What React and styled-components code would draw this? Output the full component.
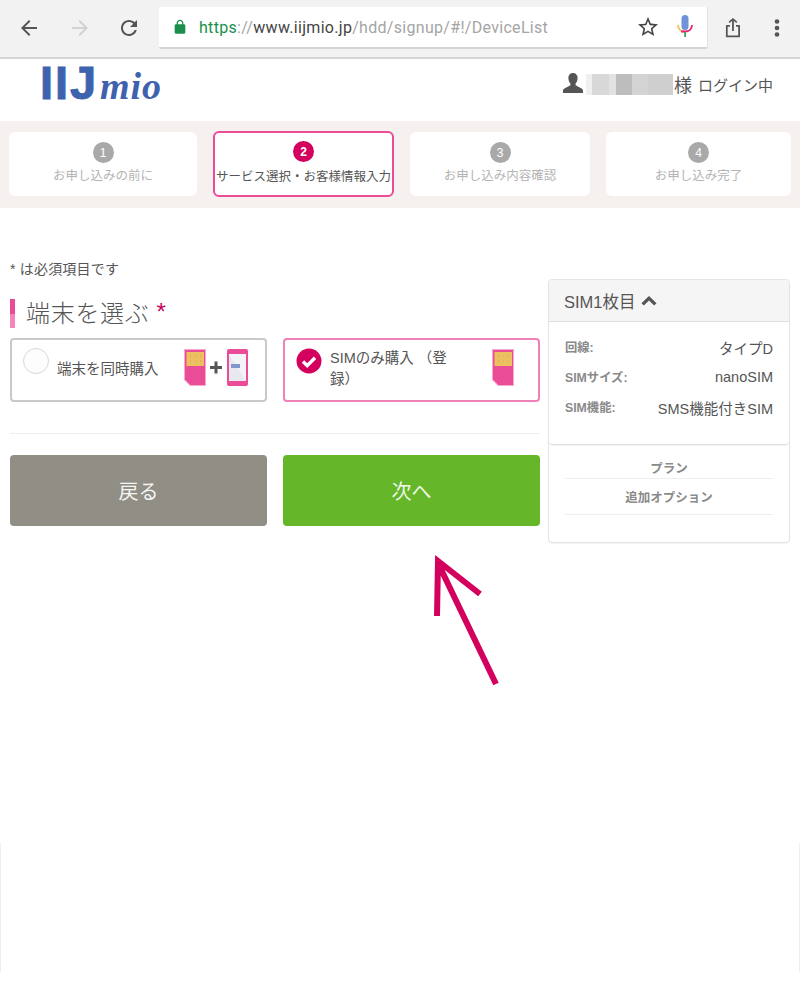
import React from "react";
import styled, { createGlobalStyle } from "styled-components";

const GlobalStyle = createGlobalStyle`
  * { box-sizing: border-box; }
  html, body { margin: 0; padding: 0; background: #fff; }
  body { font-family: "Liberation Sans", "Noto Sans CJK JP", sans-serif; color: #555; }
`;

const Page = styled.div`
  position: relative;
  width: 800px;
  height: 1005px;
  overflow: hidden;
  background: #fff;
`;

/* browser chrome */
const Chrome = styled.div`
  display: flex;
  align-items: center;
  height: 59px;
  padding: 0 0 1px 17px;
  background: #f2f2f2;
  border-bottom: 2px solid #d6d6d6;
`;
const NavIcon = styled.svg`
  width: 24px;
  height: 24px;
  margin-right: ${(p) => p.$gap}px;
  fill: ${(p) => p.$color || "#555"};
  flex: none;
`;
const UrlBox = styled.div`
  display: flex;
  align-items: center;
  width: 549px;
  height: 42px;
  margin-right: 13px;
  padding-left: 13px;
  background: #fff;
  border-radius: 2px;
  border-bottom: 2px solid #d4d4d4;
  border-right: 1px solid #e2e2e2;
  font-family: Roboto, sans-serif;
  font-size: 16px;
`;
const LockIcon = styled.svg`
  width: 16px;
  height: 16px;
  fill: #1a8f4c;
  margin-right: 11px;
  flex: none;
`;
const UrlText = styled.span`
  flex: 1;
  white-space: nowrap;
  color: #a5a5a5;
  letter-spacing: 0.3px;
`;
const Scheme = styled.span`
  color: #1a8f4c;
`;
const Host = styled.span`
  color: #444;
`;

/* site header */
const SiteHeader = styled.header`
  display: flex;
  align-items: center;
  justify-content: space-between;
  height: 62px;
  padding: 0 27px 12px 40px;
`;
const Logo = styled.div`
  display: flex;
  align-items: baseline;
  margin-top: -3px;
  color: #3e62ae;
  line-height: 1;
`;
const LogoBlock = styled.span`
  font-family: "Liberation Sans", sans-serif;
  font-weight: 700;
  font-size: 47px;
  letter-spacing: 2px;
  width: 60px;
  -webkit-text-stroke: 1px #3e62ae;
`;
const LogoScript = styled.span`
  font-family: "Liberation Serif", serif;
  font-style: italic;
  font-weight: 700;
  font-size: 38px;
  letter-spacing: 1px;
`;
const LoginInfo = styled.div`
  display: flex;
  align-items: center;
  font-size: 15px;
  color: #555;
  white-space: nowrap;
`;
const PersonIcon = styled.svg`
  width: 20px;
  height: 20px;
  fill: #555;
  margin-right: 3px;
  margin-top: -3px;
`;
const Mosaic = styled.div`
  display: flex;
  width: 87px;
  height: 21px;
`;
const MosaicCell = styled.div`
  width: ${(p) => p.$w}px;
  background: ${(p) => p.$c};
`;
const Sama = styled.span`
  font-size: 18px;
  margin: 0 6px 0 1px;
`;

/* step bar */
const StepBar = styled.nav`
  display: flex;
  align-items: flex-start;
  gap: 16px;
  height: 87px;
  padding: 11px 9px 0;
  background: #f6f1ee;
`;
const StepCard = styled.div`
  display: flex;
  flex-direction: column;
  align-items: center;
  width: ${(p) => p.$w}px;
  height: ${(p) => (p.$active ? 66 : 64)}px;
  margin-top: ${(p) => (p.$active ? -1 : 0)}px;
  padding-top: ${(p) => (p.$active ? 8 : 10)}px;
  background: #fff;
  border-radius: 6px;
  border: ${(p) => (p.$active ? "2px solid #ea4c98" : "none")};
  color: ${(p) => (p.$active ? "#555" : "#b4b4b4")};
  font-size: 12.5px;
  white-space: nowrap;
`;
const StepNum = styled.div`
  display: flex;
  align-items: center;
  justify-content: center;
  width: 21px;
  height: 21px;
  margin-bottom: ${(p) => (p.$active ? 4 : 2)}px;
  border-radius: 50%;
  background: ${(p) => (p.$active ? "#d4005d" : "#a9a9a9")};
  color: #fff;
  font-size: 12px;
  font-weight: ${(p) => (p.$active ? 700 : 400)};
`;

/* main content */
const Main = styled.main`
  display: flex;
  align-items: flex-start;
  gap: 8px;
  padding: 68px 10px 0 10px;
`;
const FormColumn = styled.div`
  width: 530px;
  flex: none;
`;
const Required = styled.p`
  margin: -16px 0 20px;
  font-size: 14px;
  letter-spacing: 0.2px;
  line-height: 19px;
  color: #555;
`;
const Heading = styled.h2`
  display: flex;
  align-items: center;
  height: 29px;
  margin: 0 0 10px;
  padding: 0 0 4px 11px;
  font-size: 24px;
  font-weight: 300;
  color: #555;
  letter-spacing: 0.7px;
  border-left: 5px solid #f07ab5;
  border-image: linear-gradient(#e94b97 50%, #f586bd 50%) 1;
`;
const Star = styled.span`
  margin-left: 7px;
  color: #c9045c;
`;
const Options = styled.div`
  display: grid;
  grid-template-columns: 257px 257px;
  gap: 16px;
`;
const Option = styled.div`
  display: flex;
  height: 64px;
  padding: 8px 0 0 11px;
  border: 2px solid ${(p) => (p.$checked ? "#f280b8" : "#c9c9c9")};
  border-radius: 4px;
  position: relative;
`;
const Radio = styled.div`
  width: 26px;
  height: 26px;
  flex: none;
  border-radius: 50%;
  border: 1px solid #d8d8d8;
  background: #fdfdfd;
`;
const CheckIcon = styled.svg`
  width: 26px;
  height: 26px;
  flex: none;
`;
const OptionLabel = styled.div`
  width: ${(p) => p.$w}px;
  margin-left: ${(p) => p.$ml}px;
  padding-top: ${(p) => p.$pt}px;
  font-size: 14.5px;
  line-height: 21px;
  color: #555;
`;
const OptionArt = styled.svg`
  margin-left: ${(p) => p.$ml}px;
  margin-top: 1px;
  flex: none;
`;
const Divider = styled.hr`
  margin: 31px 0 21px;
  border: 0;
  border-top: 1px solid #eee;
`;
const Buttons = styled.div`
  display: grid;
  grid-template-columns: 257px 257px;
  gap: 16px;
`;
const Button = styled.button`
  height: 71px;
  border: 0;
  border-radius: 4px;
  background: ${(p) => p.$bg};
  color: rgba(255, 255, 255, 0.92);
  font-family: inherit;
  font-size: 20px;
`;

/* side panel */
const Side = styled.aside`
  width: 242px;
  height: 264px;
  margin-top: 3px;
  border: 1px solid #e4e4e4;
  border-radius: 4px;
  box-shadow: 0 1px 1px rgba(0, 0, 0, 0.05);
`;
const SideHead = styled.div`
  display: flex;
  align-items: center;
  gap: 5px;
  height: 42px;
  padding-left: 15px;
  background: #f5f5f5;
  border-bottom: 1px solid #ddd;
  border-radius: 4px 4px 0 0;
  font-size: 16.5px;
  color: #555;
`;
const Chevron = styled.svg`
  width: 16px;
  height: 12px;
  fill: #555;
`;
const SideBody = styled.dl`
  height: 123px;
  margin: 0;
  padding: 10px 16px 0;
  border-bottom: 1px solid #e2e2e2;
  border-radius: 0 0 4px 4px;
  box-shadow: 0 1px 1px rgba(0, 0, 0, 0.06);
`;
const SideRow = styled.div`
  display: flex;
  align-items: center;
  justify-content: space-between;
  height: 30px;
`;
const SideKey = styled.dt`
  font-size: 12.3px;
  font-weight: 700;
  color: #8a8a8a;
`;
const SideValue = styled.dd`
  margin: 0;
  font-size: 14.5px;
  color: #555;
`;
const SideLinks = styled.div`
  padding: 16px 16px 0;
`;
const SideLink = styled.div`
  height: ${(p) => p.$h}px;
  padding-top: ${(p) => p.$pt}px;
  border-bottom: 1px solid #eee;
  text-align: center;
  font-size: 12.5px;
  line-height: 17px;
  font-weight: 700;
  color: #8a8a8a;
`;

const FooterStrip = styled.div`
  height: 129px;
  margin-top: 300px;
  border-left: 1px solid #eee;
  border-right: 1px solid #eee;
`;
const Arrow = styled.svg`
  position: absolute;
  left: 420px;
  top: 550px;
`;

const steps = [
  { n: 1, label: "お申し込みの前に", w: 188 },
  { n: 2, label: "サービス選択・お客様情報入力", w: 181, active: true },
  { n: 3, label: "お申し込み内容確認", w: 180 },
  { n: 4, label: "お申し込み完了", w: 185 },
];

const mosaic = [
  ["#f0f0f0", 6], ["#d8d8d8", 17], ["#e2e2e2", 7], ["#bdbdbd", 16],
  ["#d4d4d4", 16], ["#cfcfcf", 25],
];

const SimCard = () => (
  <g>
    <path d="M0 0H22V37H6L0 31Z" fill="#f6a9cf" />
    <path d="M1 1H21V36H6.5L1 30.5Z" fill="#ea4c98" />
    <rect x="2.5" y="3" width="17.5" height="14" fill="#ecc05f" />
    <path d="M6 7h1M11 7h1M16 7h1M6 12h1M11 12h1M16 12h1" stroke="#e58f7c" strokeWidth="1" />
  </g>
);

export default function App() {
  return (
    <Page>
      <GlobalStyle />
      <Chrome>
        <NavIcon viewBox="0 0 24 24" $gap={27}>
          <path d="M20 11H7.83l5.59-5.59L12 4l-8 8 8 8 1.41-1.41L7.83 13H20v-2z" />
        </NavIcon>
        <NavIcon viewBox="0 0 24 24" $gap={25} $color="#d2d2d2">
          <path d="M12 4l-1.41 1.41L16.17 11H4v2h12.17l-5.58 5.59L12 20l8-8z" />
        </NavIcon>
        <NavIcon viewBox="0 0 24 24" $gap={18}>
          <path d="M17.65 6.35C16.2 4.9 14.21 4 12 4c-4.42 0-7.99 3.58-7.99 8s3.57 8 7.99 8c3.73 0 6.84-2.55 7.73-6h-2.08c-.82 2.33-3.04 4-5.65 4-3.31 0-6-2.69-6-6s2.69-6 6-6c1.66 0 3.14.69 4.22 1.78L13 11h7V4l-2.35 2.35z" />
        </NavIcon>
        <UrlBox>
          <LockIcon viewBox="0 0 24 24">
            <path d="M18 8h-1V6c0-2.76-2.24-5-5-5S7 3.24 7 6v2H6c-1.1 0-2 .9-2 2v10c0 1.1.9 2 2 2h12c1.1 0 2-.9 2-2V10c0-1.1-.9-2-2-2zM9 6c0-1.66 1.34-3 3-3s3 1.34 3 3v2H9V6z" />
          </LockIcon>
          <UrlText>
            <Scheme>https</Scheme>://<Host>www.iijmio.jp</Host>/hdd/signup/#!/DeviceList
          </UrlText>
          <NavIcon viewBox="0 0 24 24" $gap={13} $color="#444">
            <path d="M22 9.24l-7.19-.62L12 2 9.19 8.63 2 9.24l5.46 4.73L5.82 21 12 17.27 18.18 21l-1.63-7.03L22 9.24zM12 15.4l-3.76 2.27 1-4.28-3.32-2.88 4.38-.38L12 6.1l1.71 4.04 4.38.38-3.32 2.88 1 4.28L12 15.4z" />
          </NavIcon>
          <svg width="24" height="24" viewBox="0 0 24 24" style={{ marginRight: 10 }}>
            <rect x="8.5" y="0" width="7" height="15" rx="3.5" fill="#6f93d6" />
            <path d="M5 10c0 4 3 6.5 7 6.5" fill="none" stroke="#f0c24b" strokeWidth="1.8" />
            <path d="M19 10c0 4-3 6.5-7 6.5H8" fill="none" stroke="#e5266e" strokeWidth="1.8" />
            <rect x="11.2" y="17" width="1.8" height="5" fill="#3fa45b" />
          </svg>
        </UrlBox>
        <NavIcon viewBox="0 0 24 24" $gap={20}>
          <g transform="translate(1.4 1.9) scale(.88)">
            <path d="M11 3.2V15h2V3.2l2.6 2.6L17 4.4 12 0 7 4.4l1.4 1.4zM5 8h3.5v2H6v10h12V10h-2.5V8H19c.6 0 1 .4 1 1v12c0 .6-.4 1-1 1H5c-.6 0-1-.4-1-1V9c0-.6.4-1 1-1z" />
          </g>
        </NavIcon>
        <NavIcon viewBox="0 0 24 24" $gap={0}>
          <circle cx="12" cy="5.5" r="2.3" />
          <circle cx="12" cy="12" r="2.3" />
          <circle cx="12" cy="18.5" r="2.3" />
        </NavIcon>
      </Chrome>

      <SiteHeader>
        <Logo>
          <LogoBlock>IIJ</LogoBlock>
          <LogoScript>mio</LogoScript>
        </Logo>
        <LoginInfo>
          <PersonIcon viewBox="0 0 20 20">
            <path d="M10 0c3 0 4.6 2.2 4.6 5.2 0 2.2-.8 4-2 5.2v1.8l6 3.2c.9.5 1.4 1.2 1.4 2.1V20H0v-2.5c0-.9.5-1.6 1.4-2.1l6-3.2v-1.8c-1.2-1.2-2-3-2-5.2C5.4 2.2 7 0 10 0z" />
          </PersonIcon>
          <Mosaic>
            {mosaic.map(([c, w], i) => (
              <MosaicCell key={i} $c={c} $w={w} />
            ))}
          </Mosaic>
          <Sama>様</Sama>
          ログイン中
        </LoginInfo>
      </SiteHeader>

      <StepBar>
        {steps.map((s) => (
          <StepCard key={s.n} $w={s.w} $active={s.active}>
            <StepNum $active={s.active}>{s.n}</StepNum>
            {s.label}
          </StepCard>
        ))}
      </StepBar>

      <Main>
        <FormColumn>
          <Required>* は必須項目です</Required>
          <Heading>
            端末を選ぶ<Star>*</Star>
          </Heading>
          <Options>
            <Option>
              <Radio />
              <OptionLabel $w={112} $ml={8} $pt={11}>端末を同時購入</OptionLabel>
              <OptionArt width="64" height="38" viewBox="0 0 64 38" $ml={15}>
                <SimCard />
                <path d="M26 18.5h12M32 12.5v12" stroke="#555" strokeWidth="3" />
                <rect x="43" y="0" width="21" height="37" rx="2" fill="#ea4c98" />
                <path d="M45 5H62V32H45Z" fill="#f4f4f8" />
                <path d="M45 5L62 32H45Z" fill="#e8e8ee" />
                <rect x="47" y="15" width="9" height="4" fill="#7f97cc" />
              </OptionArt>
            </Option>
            <Option $checked>
              <CheckIcon viewBox="0 0 26 26">
                <circle cx="13" cy="13" r="12.5" fill="#d4005d" />
                <path d="M7 13.5l4.2 4.2L19 9.8" fill="none" stroke="#fff" strokeWidth="3.4" />
              </CheckIcon>
              <OptionLabel $w={125} $ml={8} $pt={0}>SIMのみ購入 （登録）</OptionLabel>
              <OptionArt width="22" height="38" viewBox="0 0 22 38" $ml={37}>
                <SimCard />
              </OptionArt>
            </Option>
          </Options>
          <Divider />
          <Buttons>
            <Button $bg="#918e86">戻る</Button>
            <Button $bg="#66b62a">次へ</Button>
          </Buttons>
        </FormColumn>

        <Side>
          <SideHead>
            SIM1枚目
            <Chevron viewBox="0 0 16 12">
              <path d="M8 1l7.5 7.3-2.3 2.3L8 5.6l-5.2 5-2.3-2.3z" />
            </Chevron>
          </SideHead>
          <SideBody>
            <SideRow>
              <SideKey>回線:</SideKey>
              <SideValue>タイプD</SideValue>
            </SideRow>
            <SideRow>
              <SideKey>SIMサイズ:</SideKey>
              <SideValue>nanoSIM</SideValue>
            </SideRow>
            <SideRow>
              <SideKey>SIM機能:</SideKey>
              <SideValue>SMS機能付きSIM</SideValue>
            </SideRow>
          </SideBody>
          <SideLinks>
            <SideLink $h={18} $pt={0}>プラン</SideLink>
            <SideLink $h={36} $pt={11}>追加オプション</SideLink>
          </SideLinks>
        </Side>
      </Main>

      <FooterStrip />

      <Arrow width="90" height="145" viewBox="0 0 90 145">
        <path d="M76 134L18 13M17 66L18 11L60 44" fill="none" stroke="#d4005d" strokeWidth="6" />
      </Arrow>
    </Page>
  );
}
